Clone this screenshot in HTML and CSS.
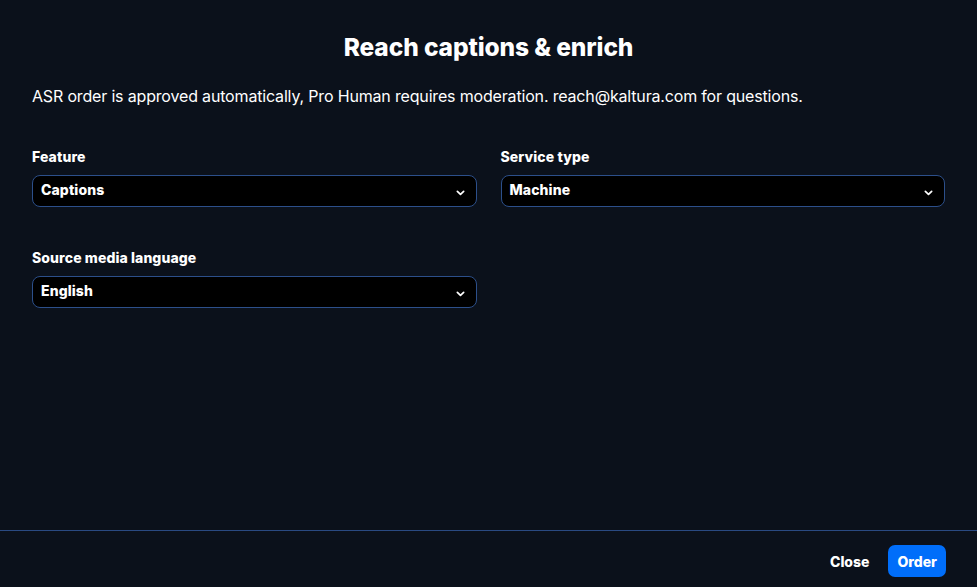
FILE: index.html
```html
<!DOCTYPE html>
<html lang="en">
<head>
<meta charset="utf-8">
<title>Reach captions &amp; enrich</title>
<link rel="stylesheet" href="styles.css">
</head>
<body>
<div class="modal">
  <div class="content">
    <h1 class="title">Reach captions &amp; enrich</h1>
    <p class="desc">ASR order is approved automatically, Pro Human requires moderation. reach@kaltura.com for questions.</p>
    <div class="grid">
      <div class="field">
        <div class="label">Feature</div>
        <div class="select"><span>Captions</span>
          <svg class="chev" viewBox="0 0 10 6" width="9" height="6"><path d="M1.5 1.2 L5 4.6 L8.5 1.2" fill="none" stroke="#fff" stroke-width="1.9" stroke-linecap="round" stroke-linejoin="round"/></svg>
        </div>
      </div>
      <div class="field">
        <div class="label">Service type</div>
        <div class="select"><span>Machine</span>
          <svg class="chev" viewBox="0 0 10 6" width="9" height="6"><path d="M1.5 1.2 L5 4.6 L8.5 1.2" fill="none" stroke="#fff" stroke-width="1.9" stroke-linecap="round" stroke-linejoin="round"/></svg>
        </div>
      </div>
      <div class="field">
        <div class="label">Source media language</div>
        <div class="select"><span>English</span>
          <svg class="chev" viewBox="0 0 10 6" width="9" height="6"><path d="M1.5 1.2 L5 4.6 L8.5 1.2" fill="none" stroke="#fff" stroke-width="1.9" stroke-linecap="round" stroke-linejoin="round"/></svg>
        </div>
      </div>
    </div>
  </div>
  <div class="footer">
    <button class="btn btn-close">Close</button>
    <button class="btn btn-order">Order</button>
  </div>
</div>
</body>
</html>
```

FILE: styles.css
```css
html, body {
  margin: 0;
  padding: 0;
  height: 100%;
  background: #0b111b;
}
body {
  font-family: Inter, "Noto Sans", "Liberation Sans", sans-serif;
  color: #ffffff;
}
.modal {
  height: 587px;
  display: flex;
  flex-direction: column;
}
.content {
  flex: 1;
  padding: 0 32px;
}
.title {
  margin: 0;
  padding-top: 32px;
  font-size: 24.5px;
  line-height: 30px;
  font-weight: 800;
  text-align: center;
  letter-spacing: -0.1px;
}
.desc {
  margin: 23px 0 0;
  font-size: 16px;
  line-height: 22px;
  font-weight: 400;
  letter-spacing: -0.17px;
}
.grid {
  margin-top: 41px;
  display: grid;
  grid-template-columns: 1fr 1fr;
  column-gap: 24px;
  row-gap: 42px;
}
.label {
  font-size: 14px;
  line-height: 18px;
  font-weight: 800;
  margin-bottom: 9px;
  letter-spacing: 0.1px;
}
.select {
  height: 32px;
  box-sizing: border-box;
  background: #000;
  border: 1px solid #2c4f8a;
  border-radius: 8px;
  display: flex;
  align-items: center;
  justify-content: space-between;
  padding: 0 11px 0 8px;
  font-size: 14px;
  font-weight: 800;
  letter-spacing: 0.1px;
}
.select span {
  margin-top: -3px;
}
.chev {
  margin-top: 4px;
}
.footer {
  border-top: 1px solid #2a4a82;
  height: 56px;
  display: flex;
  align-items: center;
  justify-content: flex-end;
  padding: 0 31px 0 0;
  gap: 10px;
}
.btn {
  font-family: inherit;
  font-size: 14px;
  font-weight: 800;
  color: #fff;
  border: none;
  border-radius: 7px;
  height: 32px;
  padding: 0 9px;
  cursor: pointer;
}
.btn-close {
  background: transparent;
  margin-top: 4px;
}
.btn-order {
  background: #006efa;
  margin-top: 4px;
}
```
